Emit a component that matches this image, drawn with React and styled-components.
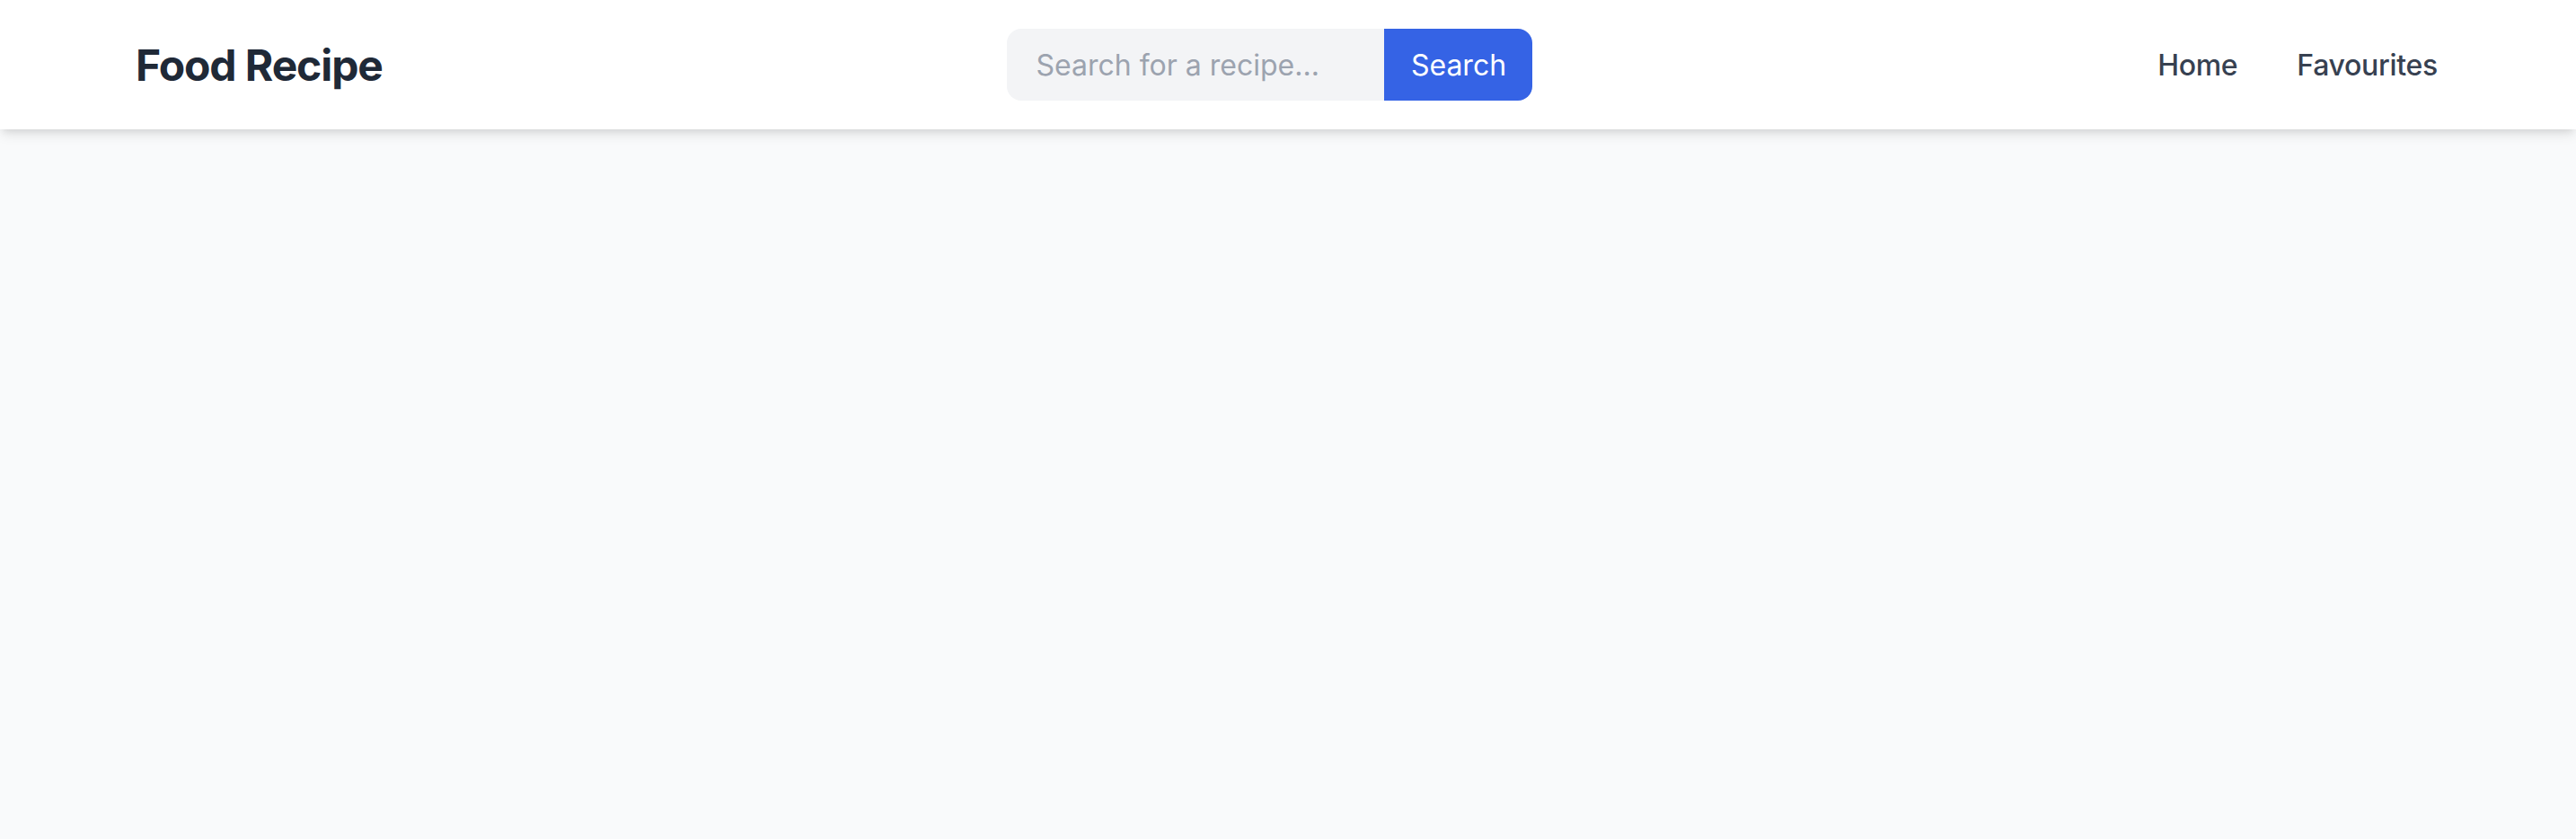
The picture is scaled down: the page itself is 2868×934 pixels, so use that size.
import styled, { createGlobalStyle } from 'styled-components';

const GlobalStyle = createGlobalStyle`
	html, body, #root {
		margin: 0;
		min-height: 100%;
		height: 100%;
	}
	body {
		background: #f9fafb;
		font-family: Inter, 'Noto Sans', 'Liberation Sans', sans-serif;
		-webkit-font-smoothing: antialiased;
	}
	* {
		box-sizing: border-box;
	}
`;

const Page = styled.div`
	min-height: 100%;
	background: #f9fafb;
`;

const Header = styled.header`
	background: #ffffff;
	height: 144px;
	box-shadow: 0 8px 12px -2px rgba(0, 0, 0, 0.1), 0 4px 8px -4px rgba(0, 0, 0, 0.1);
`;

const Bar = styled.div`
	max-width: 2566px;
	height: 100%;
	margin: 0 auto;
	display: flex;
	align-items: center;
	justify-content: space-between;
`;

const Logo = styled.h1`
	margin: 0;
	font-size: 48px;
	font-weight: 700;
	letter-spacing: -1.1px;
	color: #1f2937;
`;

const SearchForm = styled.form`
	display: flex;
	height: 80px;
`;

const SearchInput = styled.input`
	width: 420px;
	height: 100%;
	border: none;
	outline: none;
	padding: 0 32px;
	background: #f3f4f6;
	border-radius: 16px 0 0 16px;
	font-family: inherit;
	font-size: 32px;
	color: #1f2937;

	&::placeholder {
		color: #9ca3af;
	}
`;

const SearchButton = styled.button`
	height: 100%;
	width: 165px;
	border: none;
	background: #3563e5;
	color: #ffffff;
	border-radius: 0 16px 16px 0;
	font-family: inherit;
	font-size: 32px;
	cursor: pointer;
`;

const Nav = styled.nav`
	display: flex;
	align-items: center;
	gap: 66px;
	margin-right: 3px;
`;

const NavLink = styled.a`
	font-size: 32px;
	color: #374151;
	text-decoration: none;
	font-weight: 500;
	letter-spacing: -0.3px;
`;

const App = () => {
	return (
		<Page>
			<GlobalStyle />
			<Header>
				<Bar>
					<Logo>Food Recipe</Logo>
					<SearchForm onSubmit={(e) => e.preventDefault()}>
						<SearchInput type="text" placeholder="Search for a recipe..." />
						<SearchButton type="submit">Search</SearchButton>
					</SearchForm>
					<Nav>
						<NavLink href="#">Home</NavLink>
						<NavLink href="#">Favourites</NavLink>
					</Nav>
				</Bar>
			</Header>
		</Page>
	);
};

export default App;
